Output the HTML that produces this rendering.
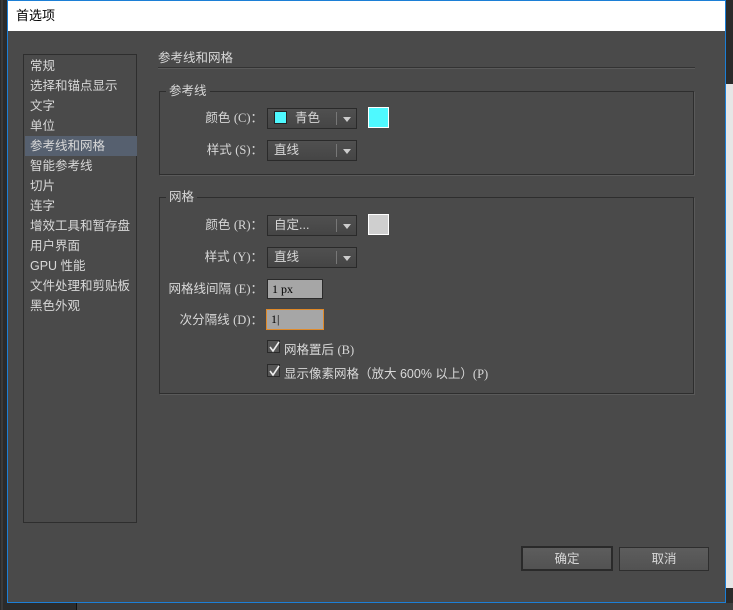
<!DOCTYPE html>
<html><head><meta charset="utf-8"><style>
*{margin:0;padding:0;box-sizing:border-box}
body{width:733px;height:610px;background:#2b2b2b;position:relative;overflow:hidden;font-family:"Liberation Sans","Noto Sans CJK SC","WenQuanYi Zen Hei",sans-serif;font-size:12px;color:#d8d8d8}
.a{position:absolute}
#dlg{left:7px;top:0;width:719px;height:603px;border:1px solid #1c7fd6;background:#4a4a4a}
#title{left:8px;top:1px;width:717px;height:30px;background:#fff;color:#000;font-size:13px;line-height:30px;padding-left:8px}
.side{left:23px;top:54px;width:114px;height:469px;border:1px solid #2e2e2e}
.it{position:absolute;left:6px;height:20px;line-height:20px;font-size:12.5px;white-space:nowrap}
.sel{position:absolute;left:1px;width:112px;top:81px;height:20px;background:#56606f}
.grp{border:1px solid #2e2e2e;box-shadow:1px 1px 0 #5a5a5a}
.lg{position:absolute;background:#4a4a4a;padding:0 3px;font-size:12.5px;line-height:14px}
.lbl{position:absolute;text-align:right;width:130px;font-size:12.5px;line-height:20px;white-space:nowrap}
.s{font-family:"Liberation Serif",serif;font-size:12.5px}
.dd{position:absolute;width:90px;height:21px;border:1px solid #2a2a2a;background:linear-gradient(#505050,#454545);font-size:12.5px;line-height:19px;padding-left:6px}
.dd:after{content:"";position:absolute;right:5px;top:8px;border-left:4px solid transparent;border-right:4px solid transparent;border-top:5px solid #ccc}
.dd:before{content:"";position:absolute;right:19px;top:3px;width:1px;height:13px;background:#777}
.inp{position:absolute;width:56px;height:20px;background:#a6a6a6;border:1px solid #2a2a2a;color:#000;font-family:"Liberation Serif",serif;font-size:12px;line-height:18px;padding-left:4px}
.cb{position:absolute;width:13px;height:13px;border:1px solid #2a2a2a;background:#555}
.cb svg{position:absolute;left:0;top:0}
.btn{position:absolute;height:25px;background:linear-gradient(#5d5d5d,#525252);border:1px solid #2e2e2e;text-align:center;line-height:22px;font-size:12.5px}
</style></head><body>
<div class="a" style="left:1px;top:0;width:2px;height:610px;background:#3a3a3a"></div>
<div class="a" style="left:726px;top:84px;width:7px;height:504px;background:#e6e6e6"></div>
<div class="a" style="left:76px;top:603px;width:1px;height:7px;background:#111"></div>
<div class="a" style="left:77px;top:603px;width:656px;height:7px;background:#3f3f3f"></div>
<div class="a" id="dlg"></div>
<div class="a" id="title">首选项</div>
<div class="a side">
<div class="sel"></div>
<div class="it" style="top:1px">常规</div>
<div class="it" style="top:21px">选择和锚点显示</div>
<div class="it" style="top:41px">文字</div>
<div class="it" style="top:61px">单位</div>
<div class="it" style="top:81px">参考线和网格</div>
<div class="it" style="top:101px">智能参考线</div>
<div class="it" style="top:121px">切片</div>
<div class="it" style="top:141px">连字</div>
<div class="it" style="top:161px">增效工具和暂存盘</div>
<div class="it" style="top:181px">用户界面</div>
<div class="it" style="top:201px">GPU 性能</div>
<div class="it" style="top:221px">文件处理和剪贴板</div>
<div class="it" style="top:241px">黑色外观</div>
</div>
<div class="a" style="left:158px;top:50px;font-size:12.5px;line-height:16px">参考线和网格</div>
<div class="a" style="left:158px;top:67px;width:537px;height:1px;background:#333;box-shadow:0 1px 0 #5a5a5a"></div>

<div class="a grp" style="left:159px;top:91px;width:535px;height:84px"></div>
<div class="lg" style="left:166px;top:84px">参考线</div>
<div class="lbl" style="left:133px;top:108px">颜色 <span class="s">(C)</span>：</div>
<div class="dd" style="left:267px;top:108px"><span style="display:inline-block;width:13px;height:13px;background:#4ef9ff;border:1px solid #222;vertical-align:-2px;margin-right:8px"></span>青色</div>
<div class="a" style="left:368px;top:107px;width:21px;height:21px;background:#4ef9ff;border:1px solid #fff"></div>
<div class="lbl" style="left:133px;top:140px">样式 <span class="s">(S)</span>：</div>
<div class="dd" style="left:267px;top:140px">直线</div>

<div class="a grp" style="left:159px;top:197px;width:535px;height:197px"></div>
<div class="lg" style="left:166px;top:190px">网格</div>
<div class="lbl" style="left:133px;top:215px">颜色 <span class="s">(R)</span>：</div>
<div class="dd" style="left:267px;top:215px">自定...</div>
<div class="a" style="left:368px;top:214px;width:21px;height:21px;background:#cfcfcf;border:1px solid #fff"></div>
<div class="lbl" style="left:133px;top:247px">样式 <span class="s">(Y)</span>：</div>
<div class="dd" style="left:267px;top:247px">直线</div>
<div class="lbl" style="left:133px;top:279px">网格线间隔 <span class="s">(E)</span>：</div>
<div class="inp" style="left:267px;top:279px">1 px</div>
<div class="lbl" style="left:133px;top:310px">次分隔线 <span class="s">(D)</span>：</div>
<div class="inp" style="left:266px;top:309px;width:58px;height:21px;border-color:#e08a2a">1|</div>
<div class="cb" style="left:267px;top:340px"><svg width="13" height="13"><path d="M2 6 L5 10 L11 1" stroke="#eee" stroke-width="1.6" fill="none"/></svg></div>
<div class="a" style="left:284px;top:339px;font-size:12.5px">网格置后 <span class="s">(B)</span></div>
<div class="cb" style="left:267px;top:364px"><svg width="13" height="13"><path d="M2 6 L5 10 L11 1" stroke="#eee" stroke-width="1.6" fill="none"/></svg></div>
<div class="a" style="left:284px;top:363px;font-size:12.5px">显示像素网格（放大 600% 以上）<span class="s">(P)</span></div>

<div class="btn" style="left:521px;top:546px;width:92px;border:2px solid #2a2a2a">确定</div>
<div class="btn" style="left:619px;top:547px;width:90px;height:24px">取消</div>
</body></html>
